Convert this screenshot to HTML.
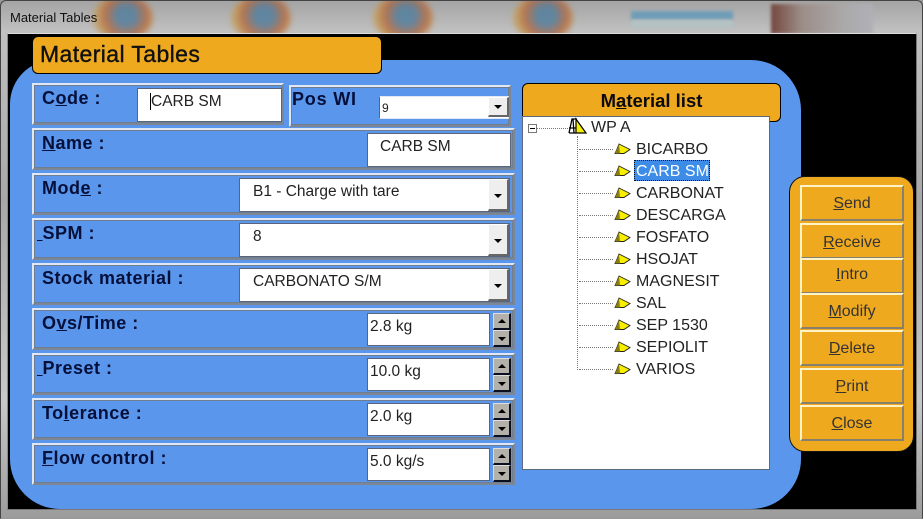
<!DOCTYPE html>
<html><head><meta charset="utf-8">
<style>
html,body{margin:0;padding:0;width:923px;height:519px;overflow:hidden;background:#999}
*{box-sizing:border-box}
body{position:relative;font-family:"Liberation Sans",sans-serif;color:#000}
.a,.p,.i,.l,.t,.b,.dd,.sp,.ar{position:absolute}
.p{border:2px solid #dfe8f4;border-right-color:#7d8794;border-bottom-color:#7d8794;outline:1px solid #6f7d92;outline-offset:-3px;background:#5a96ec}
.l{font-weight:bold;font-size:18px;line-height:20px;letter-spacing:.5px;color:#05103a;white-space:nowrap}
.i{background:#fff;border:1px solid #58657a;font-size:15.500px;line-height:20px;color:#222;white-space:nowrap;font-weight:normal}
.dd{width:21px;background:#eee;border-right:2px solid #666;border-bottom:2px solid #666;border-top:1px solid #fff;border-left:1px solid #fff}
.ar{width:0;height:0;border-left:4px solid transparent;border-right:4px solid transparent;border-top:4px solid #000}
.sp{width:18px;height:17px;background:#b4b1aa;border-top:1px solid #ddd;border-left:1px solid #ddd;border-right:2px solid #0a1020;border-bottom:2px solid #0a1020}
.up{border-top:0;border-bottom:4px solid #000;left:4px;top:5px}
.dn{left:4px;top:6px}
.b{left:800px;width:104px;background:#eea91f;border:2px solid #fff3c8;border-right-color:#85806f;border-bottom-color:#85806f;text-align:center;font-size:16px;color:#333;line-height:32px}
.t{font-size:16px;line-height:18px;color:#222;white-space:nowrap;left:636px}
.tri{position:absolute;left:614px;width:18px;height:12px}
.h{position:absolute;border-top:1px dotted #777;height:0;left:579px;width:34px}
.ff{position:absolute;top:-6px;width:60px;height:46px;border-radius:50%;filter:blur(3px);opacity:.8;background:radial-gradient(circle at 55% 45%,#4d7b9c 22%,#b6653a 50%,#c49a52 70%,#c6b690 100%)}
</style></head><body>
<!-- title bar -->
<div class="a" style="left:0;top:0;width:923px;height:519px;background:linear-gradient(#a4a4a4,#c0c0c0 30px,#a8a8a8 200px,#c8c8c8 400px,#9c9c9c);border-radius:6px 6px 0 0;border:1px solid #444;border-bottom-color:#999;overflow:hidden">
<div class="ff" style="left:92px"></div>
<div class="ff" style="left:230px"></div>
<div class="ff" style="left:372px"></div>
<div class="ff" style="left:512px"></div>
<div class="a" style="left:630px;top:10px;width:102px;height:9px;background:#6f9db8;filter:blur(1.500px)"></div>
<div class="a" style="left:630px;top:19px;width:102px;height:8px;background:#b4c2c4;filter:blur(1.500px)"></div>
<div class="a" style="left:770px;top:3px;width:102px;height:30px;background:linear-gradient(90deg,#74473e,#9c8d88 30%,#aaa8a8 70%,#b0b0b8);filter:blur(1.500px)"></div>
</div>
<div class="a" style="left:10px;top:10px;font-size:13px;line-height:16px;color:#111">Material Tables</div>
<!-- black client -->
<div class="a" style="left:7px;top:33px;width:910px;height:477px;background:#000;border:1px solid #777;border-top-color:#ddd;border-left-color:#888"></div>
<!-- blue -->
<div class="a" style="left:10px;top:60px;width:791px;height:449px;background:#5a96ec;border-radius:44px 50px 50px 50px"></div>
<!-- heading -->
<div class="a" style="left:32px;top:36px;width:350px;height:38px;background:#eea91f;border:1px solid #000;border-radius:6px;font-size:23px;line-height:35px;padding-left:7px;color:#111;letter-spacing:.4px;-webkit-text-stroke:.4px #111">Material Tables</div>

<!-- Code -->
<div class="p" style="left:32px;top:83px;width:252px;height:42px"></div>
<div class="l" style="left:42px;top:88px">C<u>o</u>de :</div>
<div class="i" style="left:137px;top:88px;width:145px;height:34px;padding:3px 0 0 12px"><span style="border-left:1px solid #000">CARB SM</span></div>
<!-- Pos WI -->
<div class="p" style="left:289px;top:85px;width:222px;height:42px"></div>
<div class="l" style="left:292px;top:89px;letter-spacing:.8px">Pos WI</div>
<div class="i" style="left:379px;top:96px;width:130px;height:23px;font-size:12px;padding:1px 0 0 2px;border-color:#dfe8f4 #dfe8f4 #dfe8f4 #58657a">9</div>
<div class="dd" style="left:488px;top:97px;height:20px"><span class="ar" style="left:5px;top:7px"></span></div>
<!-- Name -->
<div class="p" style="left:32px;top:128px;width:483px;height:42px"></div>
<div class="l" style="left:42px;top:133px"><u>N</u>ame :</div>
<div class="i" style="left:367px;top:133px;width:144px;height:34px;padding:3px 0 0 12px">CARB SM</div>
<!-- Mode -->
<div class="p" style="left:32px;top:173px;width:483px;height:42px"></div>
<div class="l" style="left:42px;top:178px">Mod<u>e</u> :</div>
<div class="i" style="left:239px;top:178px;width:271px;height:34px;padding:3px 0 0 13px">B1 - Charge with tare</div>
<div class="dd" style="left:488px;top:179px;height:32px"><span class="ar" style="left:5px;top:14px"></span></div>
<!-- SPM -->
<div class="p" style="left:32px;top:218px;width:483px;height:42px"></div>
<div class="l" style="left:37px;top:223px"><u>&nbsp;</u>SPM :</div>
<div class="i" style="left:239px;top:223px;width:271px;height:34px;padding:3px 0 0 13px">8</div>
<div class="dd" style="left:488px;top:224px;height:32px"><span class="ar" style="left:5px;top:14px"></span></div>
<!-- Stock -->
<div class="p" style="left:32px;top:263px;width:483px;height:42px"></div>
<div class="l" style="left:42px;top:268px">Stock material :</div>
<div class="i" style="left:239px;top:268px;width:271px;height:34px;padding:3px 0 0 13px">CARBONATO S/M</div>
<div class="dd" style="left:488px;top:269px;height:32px"><span class="ar" style="left:5px;top:14px"></span></div>
<!-- Ovs -->
<div class="p" style="left:32px;top:308px;width:483px;height:42px"></div>
<div class="l" style="left:42px;top:313px">O<u>v</u>s/Time :</div>
<div class="i" style="left:367px;top:313px;width:123px;height:33px;padding:3px 0 0 2px">2.8 kg</div>
<div class="sp" style="left:493px;top:313px"><span class="ar up"></span></div>
<div class="sp" style="left:493px;top:330px"><span class="ar dn"></span></div>
<!-- Preset -->
<div class="p" style="left:32px;top:353px;width:483px;height:42px"></div>
<div class="l" style="left:37px;top:358px"><u>&nbsp;</u>Preset :</div>
<div class="i" style="left:367px;top:358px;width:123px;height:33px;padding:3px 0 0 2px">10.0 kg</div>
<div class="sp" style="left:493px;top:358px"><span class="ar up"></span></div>
<div class="sp" style="left:493px;top:375px"><span class="ar dn"></span></div>
<!-- Tolerance -->
<div class="p" style="left:32px;top:398px;width:483px;height:42px"></div>
<div class="l" style="left:42px;top:403px">To<u>l</u>erance :</div>
<div class="i" style="left:367px;top:403px;width:123px;height:33px;padding:3px 0 0 2px">2.0 kg</div>
<div class="sp" style="left:493px;top:403px"><span class="ar up"></span></div>
<div class="sp" style="left:493px;top:420px"><span class="ar dn"></span></div>
<!-- Flow -->
<div class="p" style="left:32px;top:443px;width:483px;height:42px"></div>
<div class="l" style="left:42px;top:448px"><u>F</u>low control :</div>
<div class="i" style="left:367px;top:448px;width:123px;height:33px;padding:3px 0 0 2px">5.0 kg/s</div>
<div class="sp" style="left:493px;top:448px"><span class="ar up"></span></div>
<div class="sp" style="left:493px;top:465px"><span class="ar dn"></span></div>

<!-- Material list -->
<div class="a" style="left:522px;top:83px;width:259px;height:39px;background:#eea91f;border:1px solid #000;border-radius:6px;text-align:center;font-weight:bold;font-size:18.500px;line-height:33px;color:#0a0a10">M<u>a</u>terial list</div>
<div class="a" style="left:522px;top:116px;width:248px;height:354px;background:#fff;border:1px solid #5c6a80"></div>
<!-- tree -->
<div class="a" style="left:528px;top:124px;width:9px;height:9px;border:1px solid #777;background:#fff"><div class="a" style="left:1px;top:3px;width:5px;height:1px;background:#000"></div></div>
<div class="a" style="left:537px;top:128px;width:31px;border-top:1px dotted #777"></div>
<div class="a" style="left:577px;top:136px;height:234px;border-left:1px dotted #777"></div>
<svg class="a" style="left:568px;top:117px" width="20" height="18" viewBox="0 0 20 18"><path d="M8 2 L18 16 H8Z" fill="#f7ee00" stroke="#000" stroke-width="1.200"/><path d="M1 16 L4 2 H9 M5 2 L6 16 M1 11 H8 M1 16 H8" fill="none" stroke="#000" stroke-width="1.300"/></svg>
<div class="t" style="left:591px;top:119px">WP A</div>
<div class="h" style="top:149px"></div><div class="h" style="top:171px"></div><div class="h" style="top:193px"></div><div class="h" style="top:215px"></div><div class="h" style="top:237px"></div><div class="h" style="top:259px"></div><div class="h" style="top:281px"></div><div class="h" style="top:303px"></div><div class="h" style="top:325px"></div><div class="h" style="top:347px"></div><div class="h" style="top:369px"></div>
<svg class="tri" style="top:143px" viewBox="0 0 18 12"><path d="M5 1 L16 6.500 L10 10.500 H1 L3 6Z" fill="#f7ee00" stroke="#222" stroke-width=".9"/><path d="M5 1 L6 10.500 H1 L3 6Z" fill="#8a7d10"/></svg>
<svg class="tri" style="top:165px" viewBox="0 0 18 12"><path d="M5 1 L16 6.500 L10 10.500 H1 L3 6Z" fill="#f7ee00" stroke="#222" stroke-width=".9"/><path d="M5 1 L6 10.500 H1 L3 6Z" fill="#8a7d10"/></svg>
<svg class="tri" style="top:187px" viewBox="0 0 18 12"><path d="M5 1 L16 6.500 L10 10.500 H1 L3 6Z" fill="#f7ee00" stroke="#222" stroke-width=".9"/><path d="M5 1 L6 10.500 H1 L3 6Z" fill="#8a7d10"/></svg>
<svg class="tri" style="top:209px" viewBox="0 0 18 12"><path d="M5 1 L16 6.500 L10 10.500 H1 L3 6Z" fill="#f7ee00" stroke="#222" stroke-width=".9"/><path d="M5 1 L6 10.500 H1 L3 6Z" fill="#8a7d10"/></svg>
<svg class="tri" style="top:231px" viewBox="0 0 18 12"><path d="M5 1 L16 6.500 L10 10.500 H1 L3 6Z" fill="#f7ee00" stroke="#222" stroke-width=".9"/><path d="M5 1 L6 10.500 H1 L3 6Z" fill="#8a7d10"/></svg>
<svg class="tri" style="top:253px" viewBox="0 0 18 12"><path d="M5 1 L16 6.500 L10 10.500 H1 L3 6Z" fill="#f7ee00" stroke="#222" stroke-width=".9"/><path d="M5 1 L6 10.500 H1 L3 6Z" fill="#8a7d10"/></svg>
<svg class="tri" style="top:275px" viewBox="0 0 18 12"><path d="M5 1 L16 6.500 L10 10.500 H1 L3 6Z" fill="#f7ee00" stroke="#222" stroke-width=".9"/><path d="M5 1 L6 10.500 H1 L3 6Z" fill="#8a7d10"/></svg>
<svg class="tri" style="top:297px" viewBox="0 0 18 12"><path d="M5 1 L16 6.500 L10 10.500 H1 L3 6Z" fill="#f7ee00" stroke="#222" stroke-width=".9"/><path d="M5 1 L6 10.500 H1 L3 6Z" fill="#8a7d10"/></svg>
<svg class="tri" style="top:319px" viewBox="0 0 18 12"><path d="M5 1 L16 6.500 L10 10.500 H1 L3 6Z" fill="#f7ee00" stroke="#222" stroke-width=".9"/><path d="M5 1 L6 10.500 H1 L3 6Z" fill="#8a7d10"/></svg>
<svg class="tri" style="top:341px" viewBox="0 0 18 12"><path d="M5 1 L16 6.500 L10 10.500 H1 L3 6Z" fill="#f7ee00" stroke="#222" stroke-width=".9"/><path d="M5 1 L6 10.500 H1 L3 6Z" fill="#8a7d10"/></svg>
<svg class="tri" style="top:363px" viewBox="0 0 18 12"><path d="M5 1 L16 6.500 L10 10.500 H1 L3 6Z" fill="#f7ee00" stroke="#222" stroke-width=".9"/><path d="M5 1 L6 10.500 H1 L3 6Z" fill="#8a7d10"/></svg>
<div class="t" style="top:141px">BICARBO</div>
<div class="a" style="left:634px;top:160px;width:76px;height:21px;background:#3c8ce8;border:1px dotted #111"></div>
<div class="t" style="top:163px;color:#fff">CARB SM</div>
<div class="t" style="top:185px">CARBONAT</div>
<div class="t" style="top:207px">DESCARGA</div>
<div class="t" style="top:229px">FOSFATO</div>
<div class="t" style="top:251px">HSOJAT</div>
<div class="t" style="top:273px">MAGNESIT</div>
<div class="t" style="top:295px">SAL</div>
<div class="t" style="top:317px">SEP 1530</div>
<div class="t" style="top:339px">SEPIOLIT</div>
<div class="t" style="top:361px">VARIOS</div>

<!-- buttons panel -->
<div class="a" style="left:789px;top:176px;width:125px;height:276px;background:#eea91f;border:1px solid #111;border-radius:16px"></div>
<div class="b" style="top:185px;height:36px;line-height:34px"><u>S</u>end</div>
<div class="b" style="top:223px;height:36px;line-height:35px"><u>R</u>eceive</div>
<div class="b" style="top:258px;height:36px;line-height:29px"><u>I</u>ntro</div>
<div class="b" style="top:293px;height:36px;line-height:33px"><u>M</u>odify</div>
<div class="b" style="top:330px;height:36px;line-height:33px"><u>D</u>elete</div>
<div class="b" style="top:368px;height:36px;line-height:33px"><u>P</u>rint</div>
<div class="b" style="top:405px;height:36px;line-height:33px"><u>C</u>lose</div>
</body></html>
